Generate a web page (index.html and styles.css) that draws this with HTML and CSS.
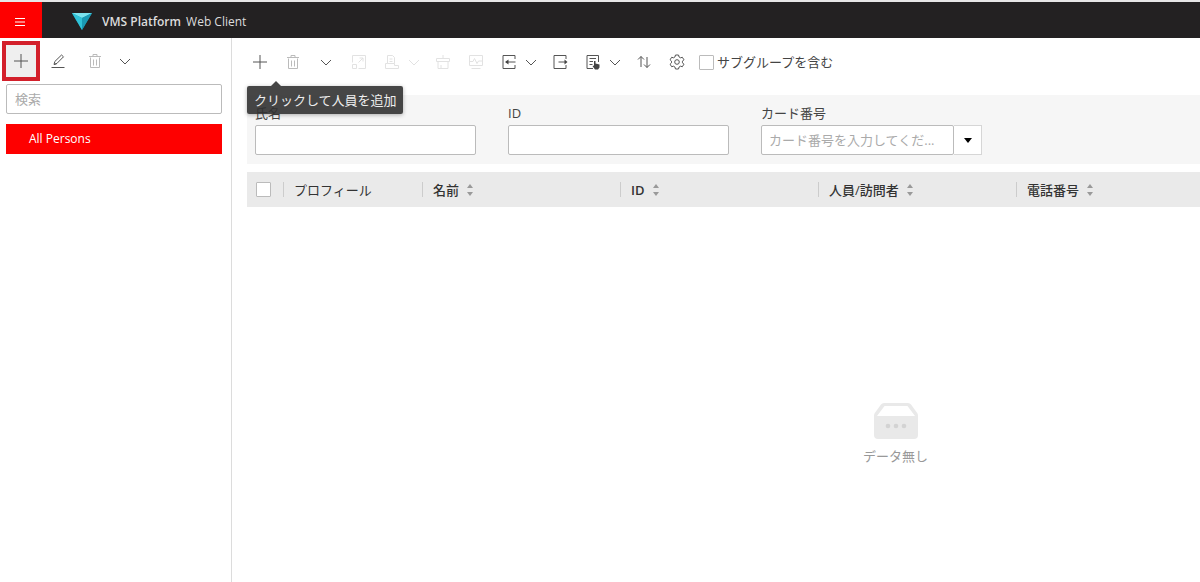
FILE: index.html
```html
<!DOCTYPE html>
<html lang="ja">
<head>
    <meta charset="UTF-8">
    <meta name="viewport" content="width=device-width, initial-scale=1.0">
    <title>VMS Platform Web Client</title>
    <link rel="stylesheet" href="styles.css">
</head>
<body>
    <header class="topbar">
        <button class="menu-btn" aria-label="メニュー">
            <svg width="10" height="10" viewBox="0 0 10 10"><path d="M0 1.5h10M0 5h10M0 8.500h10"/></svg>
        </button>
        <svg class="logo" width="20" height="17" viewBox="0 0 20 17">
            <path fill="#1b9fb8" d="M0 0h20L10 17z"/>
            <path fill="#7be3ee" d="M0 0h20l-10 5z"/>
            <path fill="#30c3d8" d="M0 0l10 5v12z"/>
            <path fill="#1a9ab4" d="M20 0l-10 5v12z"/>
        </svg>
        <h1 class="brand">VMS Platform <span>Web Client</span></h1>
    </header>

    <div class="layout">
        <aside class="sidebar">
            <div class="side-tools">
                <button class="icon-btn highlighted" aria-label="追加">
                    <svg class="icon" viewBox="0 0 16 16"><path d="M8 1v14M1 8h14"/></svg>
                </button>
                <button class="icon-btn" aria-label="編集">
                    <svg class="icon" viewBox="0 0 16 16"><path d="M1.500 14.500h13M4 11.500l.8-3L11.500 2l2 1.800-6.700 6.700zM4 11.500l3-1"/></svg>
                </button>
                <button class="icon-btn disabled" aria-label="削除" disabled>
                    <svg class="icon" viewBox="0 0 16 16"><path d="M3.500 4.500v10h9v-10M2 3.500h12M6 3.500v-2h4v2M6.500 6.500v6M9.500 6.500v6"/></svg>
                </button>
                <button class="icon-btn chevron" aria-label="その他">
                    <svg width="12" height="16" viewBox="0 0 12 16"><path d="M1 6l5 5 5-5"/></svg>
                </button>
            </div>
            <input class="search" type="text" placeholder="検索" aria-label="検索">
            <nav>
                <a class="group active" href="#">All Persons</a>
            </nav>
        </aside>

        <main class="content">
            <div class="toolbar">
                <div class="tip-anchor">
                    <button class="icon-btn" aria-label="追加" aria-describedby="add-tip">
                        <svg class="icon" viewBox="0 0 16 16"><path d="M8 1v14M1 8h14"/></svg>
                    </button>
                    <div class="tooltip" id="add-tip" role="tooltip">クリックして人員を追加</div>
                </div>
                <button class="icon-btn disabled" aria-label="削除" disabled>
                    <svg class="icon" viewBox="0 0 16 16"><path d="M3.500 4.500v10h9v-10M2 3.500h12M6 3.500v-2h4v2M6.500 6.500v6M9.500 6.500v6"/></svg>
                </button>
                <button class="icon-btn" aria-label="削除メニュー">
                    <svg width="12" height="16" viewBox="0 0 12 16"><path d="M1 6l5 5 5-5"/></svg>
                </button>
                <button class="icon-btn faint" aria-label="移動" disabled>
                    <svg class="icon" viewBox="0 0 16 16"><path d="M1.500 8.500v-7h13v13h-7M1.500 10.500h4v4h-4zM7.500 8.500l4.500-4.500M8.500 4H12v3.500"/></svg>
                </button>
                <button class="icon-btn faint" aria-label="印刷" disabled>
                    <svg class="icon" viewBox="0 0 16 16"><path d="M3.500 9.500v-8h5l2 2v6M5.500 5h3M5.500 7.500h3M3.500 9.500h-2V14.500h13v-3h-4v-2z"/></svg>
                </button>
                <button class="icon-btn chevron paired faint" aria-label="印刷メニュー" disabled>
                    <svg width="12" height="16" viewBox="0 0 12 16"><path d="M1 6l5 5 5-5"/></svg>
                </button>
                <button class="icon-btn faint" aria-label="クリア" disabled>
                    <svg class="icon" viewBox="0 0 16 16"><path d="M8 1v3.500M1.500 4.500h13v3h-13zM3 7.500v7h10v-7M6 11v3.500"/></svg>
                </button>
                <button class="icon-btn faint" aria-label="状態" disabled>
                    <svg class="icon" viewBox="0 0 16 16"><path d="M1.500 1.500h13v10h-13zM3.500 14.500h9M1.500 7.500H5l1.500-3 2.500 5 1.500-2.500h4"/></svg>
                </button>
                <button class="icon-btn" aria-label="インポート">
                    <svg class="icon" viewBox="0 0 16 16"><path d="M14 5V1.500H2v13h12V11M14.500 8H5"/><path class="solid" d="M4 8l3.500-2.500v5z"/></svg>
                </button>
                <button class="icon-btn chevron paired" aria-label="インポートメニュー">
                    <svg width="12" height="16" viewBox="0 0 12 16"><path d="M1 6l5 5 5-5"/></svg>
                </button>
                <button class="icon-btn" aria-label="エクスポート">
                    <svg class="icon" viewBox="0 0 16 16"><path d="M14 5V1.500H2v13h12V11M6.500 8H14"/><path class="solid" d="M15.500 8l-3-2.500v5z"/></svg>
                </button>
                <button class="icon-btn" aria-label="レポート">
                    <svg class="icon" viewBox="0 0 16 16"><path d="M8 14.500H2v-13h11.500V8M4.500 4.500h6.500M4.500 7.500H8M4.500 10.500h3"/><path class="solid" d="M9 7h1.500v2.500l4 1v3L13 15.500h-3L7.500 12l1.500-.5z"/></svg>
                </button>
                <button class="icon-btn chevron paired" aria-label="レポートメニュー">
                    <svg width="12" height="16" viewBox="0 0 12 16"><path d="M1 6l5 5 5-5"/></svg>
                </button>
                <button class="icon-btn" aria-label="並べ替え">
                    <svg class="icon" viewBox="0 0 16 16"><path d="M5 13V2.500M2 5.500l3-3 3 3M11 3v10.500M8 10.500l3 3 3-3"/></svg>
                </button>
                <button class="icon-btn" aria-label="設定">
                    <svg class="icon" viewBox="0 0 16 16"><path d="M6.500 1h3l.6 2 1.300.8 2-.5 1.500 2.500L13.500 7.200v1.600l1.400 1.400-1.500 2.500-2-.5-1.300.8-.6 2h-3l-.6-2-1.300-.8-2 .5-1.500-2.500 1.400-1.400V7.200L1.100 5.800l1.500-2.500 2 .5L5.900 3z"/><circle cx="8" cy="8" r="2.300"/></svg>
                </button>
                <label class="subgroup"><input class="check" type="checkbox">サブグループを含む</label>
            </div>

            <form class="filters">
                <div class="field">
                    <label for="name">氏名</label>
                    <input type="text" id="name">
                </div>
                <div class="field">
                    <label for="person-id">ID</label>
                    <input type="text" id="person-id">
                </div>
                <div class="field">
                    <label for="card">カード番号</label>
                    <div class="combo">
                        <input type="text" id="card" placeholder="カード番号を入力してくだ...">
                        <button type="button" aria-label="カード番号の選択">
                            <svg width="8" height="5" viewBox="0 0 8 5"><path d="M0 0h8L4 5z"/></svg>
                        </button>
                    </div>
                </div>
            </form>

            <div class="table-wrap">
                <table class="persons">
                    <colgroup>
                        <col class="col-check">
                        <col class="col-profile">
                        <col class="col-data">
                        <col class="col-data">
                        <col class="col-data">
                        <col>
                    </colgroup>
                    <thead>
                        <tr>
                            <th><input class="check" type="checkbox" aria-label="すべて選択"></th>
                            <th><div class="cell plain">プロフィール</div></th>
                            <th><div class="cell">名前<svg class="sort" viewBox="0 0 6 12"><path d="M3 0l3 4H0zM0 8h6l-3 4z"/></svg></div></th>
                            <th><div class="cell latin">ID<svg class="sort" viewBox="0 0 6 12"><path d="M3 0l3 4H0zM0 8h6l-3 4z"/></svg></div></th>
                            <th><div class="cell">人員/訪問者<svg class="sort" viewBox="0 0 6 12"><path d="M3 0l3 4H0zM0 8h6l-3 4z"/></svg></div></th>
                            <th><div class="cell">電話番号<svg class="sort" viewBox="0 0 6 12"><path d="M3 0l3 4H0zM0 8h6l-3 4z"/></svg></div></th>
                        </tr>
                    </thead>
                </table>
                <div class="empty">
                    <svg width="46" height="36" viewBox="0 0 46 36">
                        <path fill="#e9e9e9" fill-rule="evenodd" d="M11 0h24q2 0 3 1.500l6.500 9Q45 11.500 45 13v19q0 4-4 4H5q-4 0-4-4V13q0-1.500.5-2.500L8 1.500Q9 0 11 0zM11.500 3L4 13h38L34.500 3z"/>
                        <g fill="#d3d3d3"><circle cx="15" cy="23" r="2.300"/><circle cx="23" cy="23" r="2.300"/><circle cx="31" cy="23" r="2.300"/></g>
                    </svg>
                    <p>データ無し</p>
                </div>
            </div>
        </main>
    </div>
</body>
</html>
```
FILE: styles.css
```css
* {
    box-sizing: border-box;
}
body {
    margin: 0;
    min-height: 100vh;
    display: flex;
    flex-direction: column;
    background: #fff;
    color: #444;
    font-family: "Open Sans", "Noto Sans CJK JP", sans-serif;
    font-size: 13px;
    line-height: 20px;
}
button, input {
    font: inherit;
    margin: 0;
}
button {
    padding: 0;
    border: none;
    background: none;
    cursor: pointer;
}
svg {
    display: block;
    flex: none;
}

/* top bar */
.topbar {
    display: flex;
    align-items: center;
    height: 38px;
    border-top: 2px solid #e6e6e6;
    background: #232122;
}
.menu-btn {
    display: flex;
    align-items: center;
    justify-content: center;
    align-self: stretch;
    width: 42px;
    padding: 3px 3px 0 0;
    background: #fe0000;
}
.menu-btn path {
    stroke: #fff;
    stroke-width: 1;
}
.logo {
    margin: 2px 10px 0 30px;
}
.brand {
    margin: 0;
    padding-top: 3px;
    color: #dcdcdc;
    font-size: 12px;
    font-weight: 600;
}
.brand span {
    margin-left: 2px;
    font-weight: 400;
}

.layout {
    flex: 1;
    display: flex;
}

/* sidebar */
.sidebar {
    width: 232px;
    flex: none;
    padding: 7px 9px 0 6px;
    border-right: 1px solid #dcdcdc;
}
.side-tools {
    display: flex;
    gap: 7px;
}
.icon-btn {
    display: flex;
    align-items: center;
    justify-content: center;
    width: 33px;
    height: 32px;
}
.icon {
    width: 16px;
    height: 16px;
}
.icon-btn path, .icon-btn circle {
    fill: none;
    stroke: #555;
    stroke-width: 1;
}
.icon-btn .solid {
    fill: #444;
    stroke: none;
}
.side-tools .icon-btn {
    width: 30px;
}
.side-tools .chevron {
    width: 16px;
}
.icon-btn.highlighted {
    background: #efefef;
    outline: 4px solid #d3202b;
}
.icon-btn.disabled path {
    stroke: #bbb;
}
.icon-btn.faint path {
    stroke: #e2e2e2;
}
.search {
    display: block;
    width: 100%;
    height: 30px;
    margin: 7px 0 10px;
    padding: 0 8px;
    border: 1px solid #bbb;
    border-radius: 2px;
}
::placeholder {
    color: #aaa;
    opacity: 1;
}
.group {
    display: block;
    height: 30px;
    padding-left: 23px;
    color: #fff;
    font-size: 12px;
    line-height: 30px;
    text-decoration: none;
}
.group.active {
    background: #fe0000;
}

/* main area */
.content {
    flex: 1;
    min-width: 0;
    padding-left: 15px;
    overflow: hidden;
}
.toolbar {
    display: flex;
    align-items: center;
    height: 48px;
    margin-left: -4px;
}
.toolbar .paired {
    width: 12px;
    margin-right: 6px;
}
.tip-anchor {
    position: relative;
}
.tooltip {
    position: absolute;
    top: 40px;
    left: 4px;
    padding: 4px 6px 4px 7px;
    border-radius: 2px;
    background: rgba(50, 50, 50, 0.9);
    box-shadow: 0 1px 4px rgba(0, 0, 0, 0.3);
    color: #eee;
    white-space: nowrap;
}
.tooltip::before {
    content: "";
    position: absolute;
    bottom: 100%;
    left: 24px;
    border: 5px solid transparent;
    border-top: none;
    border-bottom-color: #464646;
}
.check {
    appearance: none;
    flex: none;
    width: 15px;
    height: 15px;
    border: 1px solid #bbb;
    border-radius: 1px;
    background: #fff;
}
.subgroup {
    display: flex;
    align-items: center;
    gap: 3px;
    margin-left: 6px;
    white-space: nowrap;
}

.filters {
    display: flex;
    gap: 32px;
    margin-top: 9px;
    padding: 8px 8px 9px;
    background: #f6f6f6;
}
.field {
    width: 221px;
}
.field label {
    display: block;
    margin-bottom: 2px;
}
.field input {
    display: block;
    width: 100%;
    height: 30px;
    padding: 0 7px;
    border: 1px solid #bbb;
    border-radius: 2px;
    background: #fff;
}
.combo {
    display: flex;
}
.combo input {
    flex: 1;
    min-width: 0;
}
.combo button {
    display: flex;
    align-items: center;
    justify-content: center;
    width: 28px;
    border: 1px solid #d6d6d6;
    border-left: none;
    background: #fff;
}

/* the list is wider than the panel, extra width is clipped */
.table-wrap {
    min-width: 1297px;
    margin-top: 8px;
}
.persons {
    width: 100%;
    table-layout: fixed;
    border-collapse: collapse;
    background: #eaeaea;
}
.col-check {
    width: 36px;
}
.col-profile {
    width: 139px;
}
.col-data {
    width: 198px;
}
.persons th {
    height: 35px;
    padding: 0;
    font-weight: 500;
    text-align: left;
    color: #333;
}
.persons .check {
    display: block;
    margin-left: 9px;
}
.cell {
    display: flex;
    align-items: center;
    gap: 8px;
    height: 15px;
    padding-left: 10px;
    border-left: 1px solid #ccc;
}
.cell.plain {
    font-weight: 400;
}
.cell.latin {
    font-weight: 600;
}
.sort {
    width: 6px;
    height: 12px;
    fill: #999;
}
.empty {
    display: flex;
    flex-direction: column;
    align-items: center;
    padding-top: 196px;
    color: #999;
}
.empty p {
    margin: 7px 0 0;
}
```
